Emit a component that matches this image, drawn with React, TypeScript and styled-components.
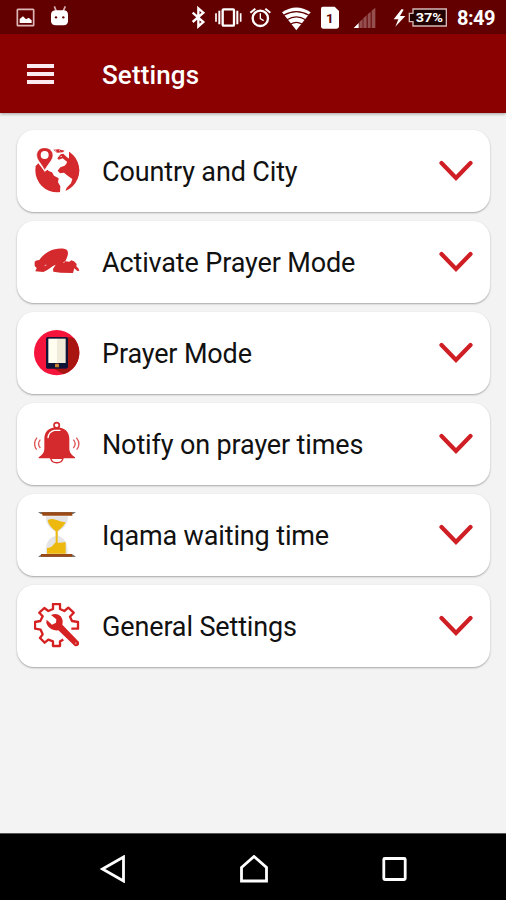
import React from "react";
import styled, { createGlobalStyle } from "styled-components";

const GlobalStyle = createGlobalStyle`
  * { box-sizing: border-box; }
  body { margin: 0; background: #f3f3f3; font-family: Roboto, "Noto Sans", sans-serif; }
`;

const Screen = styled.div`
  display: flex;
  flex-direction: column;
  width: 506px;
  height: 900px;
  overflow: hidden;
  background: #f3f3f3;
`;

const StatusBar = styled.header`
  display: flex;
  flex: none;
  height: 34px;
  background: #620000;
  color: #fff;
`;

const Glyph = styled.svg<{ $gap?: number }>`
  flex: none;
  display: block;
  height: 34px;
  margin-left: ${(p) => p.$gap ?? 0}px;
`;

const Clock = styled.time`
  margin-left: 8px;
  font-size: 20px;
  font-weight: 700;
  line-height: 36px;
  letter-spacing: -0.5px;
`;

const AppBar = styled.div`
  display: flex;
  flex: none;
  align-items: center;
  height: 79px;
  padding-left: 27px;
  background: #8b0000;
  color: #fff;
  box-shadow: 0 1px 3px rgba(0, 0, 0, 0.35);
`;

const MenuButton = styled.button`
  display: flex;
  flex-direction: column;
  gap: 4px;
  width: 27px;
  margin: 0 48px 0 0;
  padding: 0;
  border: 0;
  background: none;
`;

const MenuLine = styled.span`
  height: 4px;
  background: #fbeaf0;
`;

const Title = styled.h1`
  margin: 2px 0 0;
  font-size: 26px;
  font-weight: 500;
  line-height: 32px;
  letter-spacing: 0.13px;
`;

const List = styled.main`
  display: flex;
  flex: 1;
  flex-direction: column;
  gap: 9px;
  padding: 17px 16px 0 17px;
`;

const Card = styled.section`
  display: flex;
  flex: none;
  align-items: center;
  height: 82px;
  padding: 0 17px;
  border-radius: 17px;
  background: #fff;
  box-shadow: 0 1px 2px rgba(0, 0, 0, 0.32);
`;

const Icon = styled.svg`
  flex: none;
  width: 46px;
  height: 46px;
`;

const Label = styled.span`
  flex: 1;
  margin: 2px 0 0 22px;
  color: #111;
  font-size: 27px;
  line-height: 34px;
  letter-spacing: -0.14px;
  white-space: nowrap;
`;

const Chevron = styled.svg`
  flex: none;
  width: 34px;
  height: 22px;
  margin-bottom: 1px;
`;

const NavBar = styled.nav`
  display: flex;
  flex: none;
  align-items: center;
  justify-content: space-between;
  height: 67px;
  padding: 4px 98px 0 99px;
  border-top: 1px solid #555;
  background: #000;
`;

const NavIcon = styled.svg`
  width: 28px;
  height: 28px;
  fill: none;
  stroke: #fff;
  stroke-width: 2.8;
`;

const GlobeIcon = () => (
  <Icon viewBox="102 84 138 138">
    <circle cx="172" cy="151" r="66" fill="#d52a2d" />
    <path d="M98 75H207V114L201 122L200 130L194 137L181 142L173 152L180 160L192 158L203 167L217 177L213 190L200 203L193 222L180 220L181 199L174 187L176 175L162 167L156 157L143 152L134 158L121 139L98 137Z" fill="#fff" />
    <path d="M107 138L115 130L134 155L143 149L150 158H110Z" fill="#d52a2d" />
    <path d="M134 83C119 83 110 93 110 106C110 120 124 131 134 151C145 131 159 120 159 106C159 93 148 83 134 83Z" fill="#d52a2d" stroke="#fff" strokeWidth="2" />
    <circle cx="134" cy="105" r="12" fill="#fff" />
    <path d="M160 89L176 88L194 92L188 97L171 98ZM172 115L182 103L190 101L200 111L214 121L207 128L197 122L188 115L176 119Z" fill="#d52a2d" />
    <path d="M165 91l5 3M177 91l4 3M181 110l5-1" stroke="#fff" strokeWidth="2" />
  </Icon>
);

const ProstrationIcon = () => (
  <Icon viewBox="102 87 138 138">
    <path d="M104 155Q107 150 118 150C124 140 133 132 149 123C162 116 188 112 200 119C207 126 204 138 196 154L208 155L214 151L222 154L230 162L229 169L236 176L238 183L231 182L223 175L219 189L182 188L160 185L159 177L167 164L159 168L142 180L130 186L106 184L110 174L104 168Z" fill="#d52a2d" />
    <path d="M134 167l5-2M190 158l5-3" stroke="#fff" strokeWidth="2" fill="none" />
  </Icon>
);

const PhoneIcon = () => (
  <Icon viewBox="102 72 138 138">
    <circle cx="170" cy="140" r="68" fill="#f5143c" />
    <path d="M203 93L222 96A68 68 0 0 1 190 205L162 188H203Z" fill="#a91612" />
    <rect x="138" y="93" width="66" height="95" rx="5" fill="#101437" />
    <path d="M145 98H172V171H145Z" fill="#fffdf0" />
    <path d="M171 98H197V171H171Z" fill="#efebd8" />
    <rect x="165" y="173" width="12" height="11" rx="2" fill="#c98232" />
  </Icon>
);

const BellIcon = () => (
  <Icon viewBox="102 78 138 138">
    <circle cx="170" cy="91" r="8" fill="none" stroke="#d52a2d" strokeWidth="5" />
    <path d="M152 190a19 17 0 0 0 37 0Z" fill="#fff" stroke="#d52a2d" strokeWidth="4" />
    <path d="M170 97C145 97 133 112 133 132V163Q132 177 116 187V190H225V187Q209 177 208 163V132C208 112 195 97 170 97Z" fill="#d52a2d" />
    <path d="M144 128Q146 110 163 106L180 106" stroke="#fff" strokeWidth="4" fill="none" strokeLinecap="round" />
    <path d="M111 128Q97 146 110 164M121 134Q110 146 121 159M229 128Q244 146 230 164M220 134Q231 146 220 159" stroke="#dd5557" strokeWidth="4" fill="none" />
  </Icon>
);

const HourglassIcon = () => (
  <Icon viewBox="102 78 138 138">
    <path d="M137 91H204C204 115 193 125 174 138V149C191 155 204 166 203 203H137C137 166 147 156 167 149V138C148 126 137 113 137 91Z" fill="#e5e5e7" />
    <path d="M143 103Q152 95 170 102Q183 108 197 109Q191 122 173 135V170Q184 171 197 168V203H141V186Q155 185 160 176L167 169V135Q146 121 143 103Z" fill="#edb90f" />
    <path d="M114 78H228L220 84H122ZM114 213H228L220 206H122Z" fill="#777" />
    <path d="M124 79H217V89H128ZM123 204H217V212H123Z" fill="#9b4a16" />
  </Icon>
);

const WrenchIcon = () => (
  <Icon viewBox="102 84 138 138">
    <path d="M190 194L180 199V213H159V199L145 194L134 203L120 189L128 178L122 164L105 161V141L121 138L128 124L118 113L133 99L145 108L159 102V87H180V102L193 108L205 98L221 113L210 125L216 138L234 141V161H214" fill="none" stroke="#d52122" strokeWidth="7" strokeLinejoin="round" />
    <path d="M153 120Q170 112 182 124Q191 135 187 149L237 201Q239 215 225 214L175 166Q152 168 142 151Q137 143 140 134L156 149L168 143L169 133Z" fill="#d52122" />
    <circle cx="227" cy="205" r="3" fill="#e87776" />
  </Icon>
);

const rows = [
  { label: "Country and City", icon: <GlobeIcon /> },
  { label: "Activate Prayer Mode", icon: <ProstrationIcon /> },
  { label: "Prayer Mode", icon: <PhoneIcon /> },
  { label: "Notify on prayer times", icon: <BellIcon /> },
  { label: "Iqama waiting time", icon: <HourglassIcon /> },
  { label: "General Settings", icon: <WrenchIcon /> },
];

const BatteryText = styled.text`
  font: 700 40px Roboto, sans-serif;
  fill: #fff;
`;

const SimText = styled.text`
  font: 700 40px Roboto, sans-serif;
  fill: #620000;
`;

export default function App() {
  return (
    <>
      <GlobalStyle />
      <Screen>
        <StatusBar>
          <Glyph $gap={15} width="21" viewBox="45 0 63 102">
            <rect x="52" y="28" width="49" height="49" rx="2" fill="none" stroke="#ddb7b7" strokeWidth="5" />
            <path d="M59 69V57L69 49L78 58L86 53L95 61V69Z" fill="#fff" />
          </Glyph>
          <Glyph $gap={14} width="20" viewBox="150 0 60 102">
            <path d="M163 19L169 34M196 19L189 34" stroke="#d8b0b0" strokeWidth="5" />
            <path d="M153 43Q154 31 168 31H191Q203 31 204 43V64Q203 76 191 76H167Q154 76 153 64Z" fill="#fff" />
            <circle cx="168" cy="52" r="3.5" fill="#620000" />
            <circle cx="190" cy="52" r="3.5" fill="#620000" />
          </Glyph>
          <Glyph $gap={120} width="17" viewBox="30 0 51 102">
            <path d="M38 38L70 66L55 79V25L70 38L38 66" fill="none" stroke="#fff" strokeWidth="7" />
          </Glyph>
          <Glyph $gap={6} width="31" viewBox="99 0 93 102">
            <rect x="128" y="28" width="34" height="49" rx="3" fill="none" stroke="#fff" strokeWidth="7" />
            <path d="M118 32V73M172 32V73" stroke="#fff" strokeWidth="6" />
            <path d="M108 40V65M182 40V65" stroke="#fff" strokeWidth="5" />
          </Glyph>
          <Glyph $gap={4} width="25" viewBox="204 0 75 102">
            <circle cx="241" cy="55" r="23" fill="none" stroke="#fff" strokeWidth="7" />
            <path d="M241 40V56L251 62" fill="none" stroke="#fff" strokeWidth="4" />
            <path d="M211 38L226 26M271 38L256 26" stroke="#fff" strokeWidth="6" />
          </Glyph>
          <Glyph $gap={8} width="31" viewBox="303 0 93 102">
            <path d="M306 37Q349 8 392 37L349 91Z" fill="#fff" />
            <path d="M311 46Q349 24 387 46M321 59Q349 42 377 59M332 72Q349 62 366 72" fill="none" stroke="#620000" strokeWidth="3.5" />
          </Glyph>
          <Glyph $gap={7} width="22" viewBox="417 0 66 102">
            <path d="M428 20H464L477 33V79Q477 86 470 86H429Q423 86 423 79V26Q423 20 428 20Z" fill="#fff" />
            <SimText x="438" y="70">1</SimText>
          </Glyph>
          <Glyph $gap={11} width="26" viewBox="516 0 78 102">
            <path d="M538 84V66L548 57V84ZM550 84V55L560 46V84ZM563 84V43L572 35V84ZM575 84V32L586 23V84Z" fill="#954f4f" />
            <path d="M521 84L536 69V84Z" fill="#fff" />
          </Glyph>
          <Glyph $gap={13} width="17" viewBox="633 0 51 102">
            <path d="M665 27L641 58H655L646 80L676 48H660L671 29Z" fill="#fff" />
          </Glyph>
          <Glyph width="41" viewBox="684 0 123 102">
            <path d="M699 27H799V78H699V65H688V40H699Z" fill="#210000" stroke="#d6b8b8" strokeWidth="4" />
            <BatteryText x="707" y="67" textLength="82" lengthAdjust="spacingAndGlyphs">37%</BatteryText>
          </Glyph>
          <Clock>8:49</Clock>
        </StatusBar>
        <AppBar>
          <MenuButton aria-label="Menu">
            <MenuLine />
            <MenuLine />
            <MenuLine />
          </MenuButton>
          <Title>Settings</Title>
        </AppBar>
        <List>
          {rows.map((row) => (
            <Card key={row.label}>
              {row.icon}
              <Label>{row.label}</Label>
              <Chevron viewBox="0 0 34 22">
                <path d="M2.5 3L17 18L31.5 3" fill="none" stroke="#cf1f25" strokeWidth="4.2" strokeLinecap="round" />
              </Chevron>
            </Card>
          ))}
        </List>
        <NavBar>
          <NavIcon viewBox="0 0 28 28">
            <path d="M3.5 14L24.5 2V26Z" />
          </NavIcon>
          <NavIcon viewBox="0 0 28 28">
            <path d="M1.5 12.5L14 1.5L26.5 12.5V26H1.5Z" />
          </NavIcon>
          <NavIcon viewBox="0 0 28 28">
            <rect x="3.8" y="3.5" width="21.4" height="21" rx="1" />
          </NavIcon>
        </NavBar>
      </Screen>
    </>
  );
}
